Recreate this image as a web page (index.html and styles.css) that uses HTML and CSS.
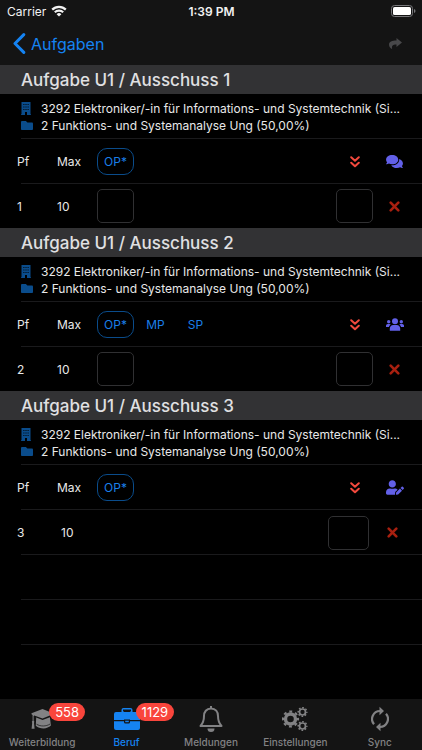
FILE: index.html
```html
<!DOCTYPE html>
<html lang="de">
<head>
<meta charset="utf-8">
<meta name="viewport" content="width=device-width, initial-scale=1">
<title>Aufgaben</title>
<link rel="stylesheet" href="styles.css">
</head>
<body>
<svg class="sprite" aria-hidden="true">
  <symbol id="building" viewBox="0 0 10 13"><path fill-rule="evenodd" d="M.5 0h9v12.300h.5v.7H6V10H4v3H0v-.7h.5zM2.400 2v1.100h1V2zm2.100 0v1.100h1V2zm2.100 0v1.100h1V2zM2.400 4.500v1.100h1V4.500zm2.100 0v1.100h1V4.500zm2.100 0v1.100h1V4.500zM2.400 7v1.100h1V7zm2.100 0v1.100h1V7zm2.100 0v1.100h1V7z"/></symbol>
  <symbol id="folder" viewBox="0 0 512 384"><path d="M464 64H272L208 0H48C21 0 0 21 0 48v288c0 27 21 48 48 48h416c27 0 48-21 48-48V112c0-27-21-48-48-48z"/></symbol>
  <symbol id="down" viewBox="0 0 10 12"><path d="M1.200 1.300 5 4.800l3.800-3.500M1.200 6.700 5 10.200l3.800-3.500" fill="none" stroke="currentColor" stroke-width="2" stroke-linecap="round" stroke-linejoin="round"/></symbol>
  <symbol id="cross" viewBox="0 0 11 11"><path d="m1.700 1.700 7.600 7.600m0-7.600L1.700 9.300" stroke="currentColor" stroke-width="2.600" stroke-linecap="round"/></symbol>
  <symbol id="comments" viewBox="0 0 576 512"><path d="M416 192c0-88.400-93.100-160-208-160S0 103.600 0 192c0 34.300 14.100 65.900 38 92-13.400 30.200-35.500 54.200-35.800 54.500-2.200 2.300-2.800 5.700-1.500 8.700S4.800 352 8 352c36.600 0 66.900-12.300 88.700-25 32.200 15.700 70.300 25 111.300 25 114.900 0 208-71.600 208-160zm122 220c23.900-26 38-57.700 38-92 0-66.900-53.500-124.200-129.300-148.100.9 6.600 1.300 13.300 1.300 20.100 0 105.900-107.700 192-240 192-10.800 0-21.300-.8-31.700-1.900C207.800 439.600 281.800 480 368 480c41 0 79.100-9.200 111.300-25 21.800 12.700 52.100 25 88.700 25 3.200 0 6.100-1.900 7.300-4.800 1.300-2.900.7-6.300-1.500-8.700-.3-.3-22.400-24.200-35.800-54.500z"/></symbol>
  <symbol id="users" viewBox="0 0 18 13"><circle cx="9" cy="3.200" r="3"/><circle cx="2.700" cy="3.700" r="1.700"/><circle cx="15.300" cy="3.700" r="1.700"/><path d="M3.800 12.700v-2.200c0-2 1.500-3.600 3.500-3.600h3.400c2 0 3.500 1.600 3.500 3.600v2.200zM0 9V7.800C0 6.800.8 6 1.800 6h1.800q.7 0 1.200.4C3.700 7.100 3.200 8 3 9zm18 0V7.800c0-1-.8-1.800-1.800-1.800h-1.800q-.7 0-1.200.4C14.300 7.100 14.800 8 15 9z"/></symbol>
  <symbol id="user-edit" viewBox="0 0 640 512"><path d="M224 256c70.700 0 128-57.300 128-128S294.700 0 224 0 96 57.300 96 128s57.300 128 128 128zm89.600 32h-16.700c-22.200 10.200-46.900 16-72.900 16s-50.600-5.800-72.900-16h-16.700C60.200 288 0 348.200 0 422.400V464c0 26.500 21.500 48 48 48h274.900c-2.400-6.800-3.400-14-2.600-21.300l6.800-60.900 1.200-11.100 7.900-7.900 77.300-77.300c-24.500-27.700-60-45.500-99.900-45.500zm45.300 145.300-6.800 61c-1.100 10.200 7.500 18.800 17.600 17.600l60.900-6.800 137.900-137.900-71.700-71.700-137.900 137.800zM633 268.900 595.100 231c-9.300-9.300-24.500-9.300-33.800 0l-37.800 37.800-4.100 4.100 71.800 71.700 41.800-41.800c9.300-9.400 9.300-24.500 0-33.900z"/></symbol>
</svg>

<header class="top">
  <div class="status">
    <span class="carrier">Carrier
      <svg width="16" height="12" viewBox="0 0 16 12" fill="none" stroke="currentColor" stroke-width="2.200" aria-hidden="true"><path d="M1.200 4.600a9.600 9.600 0 0 1 13.600 0M3.800 7.300a6 6 0 0 1 8.400 0"/><path d="M8 11.600 5.600 9.200a3.400 3.400 0 0 1 4.800 0z" fill="currentColor" stroke="none"/></svg>
    </span>
    <span class="time">1:39 PM</span>
    <svg class="battery" width="25" height="12" viewBox="0 0 25 12" aria-hidden="true"><rect x=".5" y=".5" width="21" height="11" rx="3" fill="none" stroke="#77777a"/><rect x="2" y="2" width="18" height="8" rx="1.600" fill="#fff"/><path d="M23 4v4q1.500-.6 1.500-2T23 4z" fill="#77777a"/></svg>
  </div>
  <nav class="navbar">
    <a class="back" href="#">
      <svg width="13" height="21" viewBox="0 0 13 21" fill="none" stroke="currentColor" stroke-width="3" stroke-linecap="round" stroke-linejoin="round" aria-hidden="true"><path d="M10.800 1.600 2 10.500l8.800 8.900"/></svg>
      Aufgaben
    </a>
    <button class="share" aria-label="Weiterleiten">
      <svg width="13" height="12" viewBox="0 0 13 12" fill="currentColor" aria-hidden="true"><path d="M7.500 0 13 4.500 7.500 9V6.400C4.500 6.300 2.200 7 3.200 11.200 1.200 10.300 0 8.500 0 6.600 0 3.600 3 2.600 7.500 2.500z"/></svg>
    </button>
  </nav>
</header>

<main class="list">
  <section>
    <h2>Aufgabe U1 / Ausschuss 1</h2>
    <div class="info line">
      <p><svg width="10" height="13"><use href="#building"/></svg><span>3292 Elektroniker/-in für Informations- und Systemtechnik (Si...</span></p>
      <p><svg width="12" height="9"><use href="#folder"/></svg><span>2 Funktions- und Systemanalyse Ung (50,00%)</span></p>
    </div>
    <table>
      <thead><tr class="line">
        <th>Pf</th><th>Max</th><th><button class="mode active">OP*</button></th>
        <td class="end"><button class="icon down" aria-label="Alle übernehmen"><svg width="10" height="12"><use href="#down"/></svg></button></td>
        <td><button class="icon group" aria-label="Kommentare"><svg width="17" height="15"><use href="#comments"/></svg></button></td>
      </tr></thead>
      <tbody><tr>
        <td>1</td><td>10</td><td><input aria-label="OP Punkte 1"></td>
        <td class="end"><input aria-label="Ergebnis 1"></td>
        <td><button class="icon remove" aria-label="Löschen"><svg width="11" height="11"><use href="#cross"/></svg></button></td>
      </tr></tbody>
    </table>
  </section>

  <section>
    <h2>Aufgabe U1 / Ausschuss 2</h2>
    <div class="info line">
      <p><svg width="10" height="13"><use href="#building"/></svg><span>3292 Elektroniker/-in für Informations- und Systemtechnik (Si...</span></p>
      <p><svg width="12" height="9"><use href="#folder"/></svg><span>2 Funktions- und Systemanalyse Ung (50,00%)</span></p>
    </div>
    <table>
      <thead><tr class="line">
        <th>Pf</th><th>Max</th><th><button class="mode active">OP*</button></th><th><button class="mode">MP</button></th><th><button class="mode">SP</button></th>
        <td class="end"><button class="icon down" aria-label="Alle übernehmen"><svg width="10" height="12"><use href="#down"/></svg></button></td>
        <td><button class="icon group" aria-label="Gruppe"><svg width="18" height="13"><use href="#users"/></svg></button></td>
      </tr></thead>
      <tbody><tr>
        <td>2</td><td>10</td><td><input aria-label="OP Punkte 2"></td>
        <td class="end"><input aria-label="Ergebnis 2"></td>
        <td><button class="icon remove" aria-label="Löschen"><svg width="11" height="11"><use href="#cross"/></svg></button></td>
      </tr></tbody>
    </table>
  </section>

  <section>
    <h2>Aufgabe U1 / Ausschuss 3</h2>
    <div class="info line">
      <p><svg width="10" height="13"><use href="#building"/></svg><span>3292 Elektroniker/-in für Informations- und Systemtechnik (Si...</span></p>
      <p><svg width="12" height="9"><use href="#folder"/></svg><span>2 Funktions- und Systemanalyse Ung (50,00%)</span></p>
    </div>
    <table>
      <thead><tr class="line">
        <th>Pf</th><th>Max</th><th><button class="mode active">OP*</button></th>
        <td class="end"><button class="icon down" aria-label="Alle übernehmen"><svg width="10" height="12"><use href="#down"/></svg></button></td>
        <td><button class="icon group" aria-label="Prüfer bearbeiten"><svg width="18" height="15"><use href="#user-edit"/></svg></button></td>
      </tr></thead>
      <tbody><tr class="line wide">
        <td>3</td><td>10</td>
        <td class="end"><input aria-label="Ergebnis 3"></td>
        <td><button class="icon remove" aria-label="Löschen"><svg width="11" height="11"><use href="#cross"/></svg></button></td>
      </tr></tbody>
    </table>
  </section>
  <div class="blank line"></div>
  <div class="blank line"></div>
</main>

<nav class="tabs">
  <a href="#"><span class="glyph">
    <svg width="22" height="20" viewBox="0 0 22 20" fill="currentColor" aria-hidden="true"><path d="M11.500 0 22 4.300v1l-10.500 4.200L3.300 6.400l-.7.500v4.800l.8 1-.4 1 .6 6H.6l.6-6-.4-1 .8-1V5.900L.5 5.300v-1z"/><path d="M5.200 8.600l6.300 2.500 7.400-2.800 1 8.300c-2 1.900-4.300 2.800-7.300 2.800-3.200 0-5.800-.8-7.800-2.600z"/><path d="M5.500 15.200c4 2.400 9.500 2.400 13.600-.2" fill="none" stroke="#141414" stroke-width=".7"/></svg>
    <span class="badge">558</span></span>Weiterbildung</a>
  <a href="#" class="current"><span class="glyph">
    <svg width="26" height="22" viewBox="0 0 26 22" fill="currentColor" aria-hidden="true"><path fill-rule="evenodd" d="M7.500 4V2q0-2 2-2h7q2 0 2 2v2H24q2 0 2 2v6H16v-.5h-6v.5H0V6q0-2 2-2zM9.500 4V3h-.5V1.500h8V3h-.5v1z"/><path d="M0 13.200h10V14q0 1.500 1.500 1.500h3Q16 15.500 16 14v-.8h10V20q0 2-2 2H2q-2 0-2-2z"/><path d="M11.200 12.700h3.600v1.500h-3.600z"/></svg>
    <span class="badge">1129</span></span>Beruf</a>
  <a href="#"><span class="glyph">
    <svg width="24" height="26" viewBox="0 0 24 26" fill="none" stroke="currentColor" stroke-width="2" stroke-linejoin="round" aria-hidden="true"><path d="M12 2.500c-4.600 0-7 3.500-7 7.500 0 6-1.500 7.800-3.500 10h21c-2-2.200-3.500-4-3.500-10 0-4-2.400-7.500-7-7.500z"/><path d="M12 0v2.500"/><path d="M8.500 22.500a3.500 3.500 0 0 0 7 0z" fill="currentColor" stroke="none"/></svg></span>Meldungen</a>
  <a href="#"><span class="glyph">
    <svg width="26" height="24" viewBox="0 0 26 24" fill="none" stroke="currentColor" aria-hidden="true"><circle cx="8.500" cy="12" r="5" stroke-width="3.400"/><circle cx="8.500" cy="12" r="7.500" stroke-width="2.200" stroke-dasharray="2.900 2.990" stroke-dashoffset="1.450"/><circle cx="20.500" cy="5" r="3" stroke-width="1.700"/><circle cx="20.500" cy="5" r="4.300" stroke-width="1.500" stroke-dasharray="1.700 1.677" stroke-dashoffset=".85"/><circle cx="20.500" cy="19" r="3" stroke-width="1.700"/><circle cx="20.500" cy="19" r="4.300" stroke-width="1.500" stroke-dasharray="1.700 1.677" stroke-dashoffset=".85"/></svg></span>Einstellungen</a>
  <a href="#"><span class="glyph">
    <svg width="18" height="26" viewBox="0 0 18 26" aria-hidden="true"><path d="M3 18.200A8 8 0 0 1 9 5M15 7.800A8 8 0 0 1 9 21" fill="none" stroke="currentColor" stroke-width="2.200"/><path d="M8.500.8v8.400L13 5zM9.500 25.200v-8.400L5 21z" fill="currentColor"/></svg></span>Sync</a>
</nav>
</body>
</html>
```
FILE: styles.css
```css
* { box-sizing: border-box; }

body {
  margin: 0;
  min-height: 100vh;
  display: flex;
  flex-direction: column;
  background: #000;
  color: #e8e8e8;
  font-family: Inter, "Liberation Sans", sans-serif;
  font-size: 12px;
}

svg { display: block; flex: none; }
a { text-decoration: none; color: inherit; }
button, input { font: inherit; margin: 0; }
button { padding: 0; border: 0; background: none; color: inherit; }

.sprite { position: absolute; width: 0; height: 0; }

.top { background: #141414; }

.status {
  display: grid;
  grid-template-columns: 1fr auto 1fr;
  align-items: center;
  height: 22px;
  padding: 0 6px 0 7px;
  color: #f2f2f2;
}
.carrier { display: flex; align-items: center; gap: 5px; }
.time { font-weight: 600; }
.battery { justify-self: end; }

.navbar {
  display: flex;
  align-items: center;
  justify-content: space-between;
  height: 43px;
  padding: 0 20px 0 13px;
}
.back {
  display: flex;
  align-items: center;
  gap: 5px;
  font-size: 16px;
  color: #1583f2;
}
.share { color: #48484a; }

h2 {
  margin: 0;
  padding: 2px 21px 0;
  background: #323234;
  font-size: 17px;
  font-weight: 500;
  line-height: 27px;
  color: #e0e0e2;
}

.line {
  background: linear-gradient(#1a1a1c, #1a1a1c) 21px bottom / 100% 1px no-repeat;
}

.info { height: 45px; padding: 6px 14px 0 21px; }
.info p {
  display: flex;
  align-items: center;
  margin: 0;
  line-height: 17px;
}
.info svg { fill: #0a4c8b; margin-right: auto; }
.info span {
  width: calc(100% - 20px);
  overflow: hidden;
  white-space: nowrap;
  text-overflow: ellipsis;
}

table, thead, tbody { display: block; }
tr {
  display: flex;
  align-items: center;
  height: 45px;
  padding: 0 6px 0 17px;
}
tbody tr { height: 44px; }
tbody .line { height: 45px; }
th, td {
  flex: none;
  width: 40px;
  padding: 0;
  font-weight: 400;
  text-align: left;
}
.end { margin-left: auto; }

.mode {
  display: block;
  width: 37px;
  height: 27px;
  border: 1px solid transparent;
  border-radius: 10px;
  color: #1a7fe8;
  text-align: center;
}
.active { border-color: #0a4c8b; }

input {
  display: block;
  width: 37px;
  height: 34px;
  padding: 0 4px;
  border: 1px solid #303032;
  border-radius: 5px;
  background: #000;
  color: inherit;
}

.icon {
  display: flex;
  align-items: center;
  justify-content: center;
  width: 37px;
  height: 34px;
}
.down { color: #f2493d; }
.group { color: #6260e8; }
.group svg { fill: currentColor; }
.remove { color: #a82010; }

.wide { padding-right: 8px; }
.wide td:nth-child(2) { padding-left: 4px; }
.wide .end { width: 46px; }
.wide input { width: 41px; }

.blank { height: 45px; }

.tabs {
  display: grid;
  grid-template-columns: repeat(5, 1fr);
  height: 51px;
  margin-top: auto;
  background: #141414;
  color: #828284;
  font-size: 10px;
  font-weight: 500;
}
.tabs a {
  display: flex;
  flex-direction: column;
  align-items: center;
  padding-top: 7px;
  line-height: 12px;
}
.glyph {
  position: relative;
  display: flex;
  align-items: center;
  height: 26px;
  margin-bottom: 4px;
}
.current { color: #1583f2; }
.badge {
  position: absolute;
  top: -3px;
  left: calc(100% - 4px);
  padding: 0 6px;
  border-radius: 9px;
  background: #f9453c;
  color: #fff;
  font-size: 13px;
  font-weight: 400;
  line-height: 18px;
}
```
